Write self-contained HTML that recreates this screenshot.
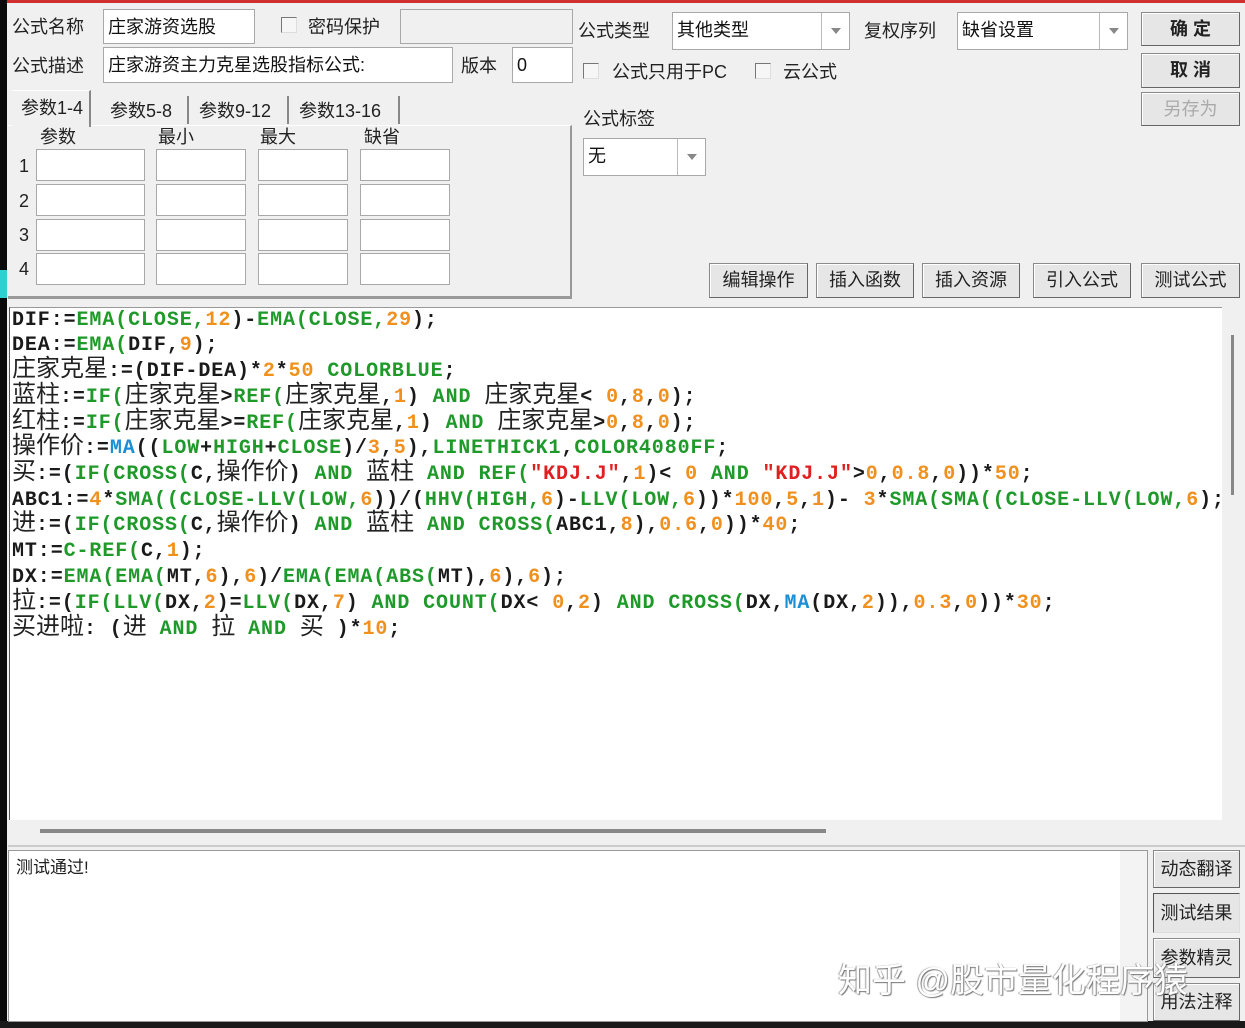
<!DOCTYPE html>
<html><head><meta charset="utf-8"><style>
*{margin:0;padding:0;box-sizing:border-box}
body{width:1245px;height:1028px;background:#f0f0f0;position:relative;overflow:hidden;font-family:"Liberation Sans","Noto Sans CJK SC",sans-serif;font-size:17px;color:#111}
.a{position:absolute}
.lbl{position:absolute;font-size:18px;color:#222;line-height:20px;white-space:nowrap}
.in{position:absolute;background:#fff;border:1px solid #a8a8a8;font-size:18px;line-height:20px;padding:7px 4px;white-space:nowrap;overflow:hidden;color:#111}
.cb{position:absolute;width:16px;height:16px;border:1px solid #777;border-right-color:#ddd;border-bottom-color:#ddd;background:#f6f6f6}
.btn{position:absolute;background:#e6e6e6;border:1px solid #8a8a8a;border-right-color:#666;border-bottom-color:#666;box-shadow:inset 1px 1px 0 #fff;font-size:18px;color:#222;text-align:center;white-space:nowrap}
.sel{position:absolute;background:#fff;border:1px solid #a8a8a8;font-size:18px;padding:7px 4px;line-height:20px}
.sel .ar{position:absolute;right:0;top:0;bottom:0;width:28px;border-left:1px solid #bbb}
.sel .ar:after{content:"";position:absolute;left:9px;top:15px;border:5px solid transparent;border-top:6px solid #888}
.code{position:absolute;left:9px;top:307px;width:1213px;height:513px;background:#fff;border-left:1px solid #555;border-top:1px solid #999;overflow:hidden}
.ln{position:absolute;left:2px;white-space:pre;font-family:"Liberation Mono","Noto Sans CJK SC",monospace;font-weight:bold;font-size:20px;letter-spacing:0.9px;color:#1a1a1a;height:26px;line-height:26px}
.c{font-family:"Noto Sans CJK SC",sans-serif;font-weight:normal;font-size:24px;letter-spacing:0;color:#222;line-height:0}
.g{color:#1f9a2a}.o{color:#f0901e}.b{color:#1b8fd6}.r{color:#e02020}
</style></head><body>
<div class="a" style="left:0;top:0;width:1245px;height:3px;background:#d03030"></div>
<div class="a" style="left:0;top:0;width:7px;height:1028px;background:#0a0a0a"></div>
<div class="a" style="left:0;top:270px;width:7px;height:28px;background:#30d0d0"></div>
<div class="a" style="left:0;top:1021px;width:1245px;height:7px;background:#1a1a1a"></div>

<div class="lbl" style="left:12px;top:17px">公式名称</div>
<div class="in" style="left:103px;top:9px;width:152px;height:35px">庄家游资选股</div>
<div class="cb" style="left:281px;top:17px"></div>
<div class="lbl" style="left:308px;top:17px">密码保护</div>
<div class="in" style="left:400px;top:9px;width:173px;height:35px;background:#f0f0f0"></div>
<div class="lbl" style="left:12px;top:56px">公式描述</div>
<div class="in" style="left:103px;top:47px;width:350px;height:36px">庄家游资主力克星选股指标公式:</div>
<div class="lbl" style="left:461px;top:56px">版本</div>
<div class="in" style="left:512px;top:47px;width:61px;height:36px">0</div>

<div class="a" style="left:8px;top:125px;width:564px;height:174px;border-right:2px solid #999;border-bottom:3px solid #999;border-top:1px solid #fff"></div>
<div class="a" style="left:12px;top:90px;width:79px;height:37px;background:#f0f0f0;border-top:1px solid #fff;border-right:2px solid #888"></div>
<div class="lbl" style="left:21px;top:98px">参数1-4</div>
<div class="lbl" style="left:110px;top:101px">参数5-8</div>
<div class="a" style="left:187px;top:96px;width:2px;height:28px;background:#888"></div>
<div class="lbl" style="left:199px;top:101px">参数9-12</div>
<div class="a" style="left:287px;top:96px;width:2px;height:28px;background:#888"></div>
<div class="lbl" style="left:299px;top:101px">参数13-16</div>
<div class="a" style="left:398px;top:96px;width:2px;height:28px;background:#888"></div>

<div class="lbl" style="left:40px;top:127px">参数</div>
<div class="lbl" style="left:158px;top:127px">最小</div>
<div class="lbl" style="left:260px;top:127px">最大</div>
<div class="lbl" style="left:364px;top:127px">缺省</div>
<div class="lbl" style="left:19px;top:156px">1</div>
<div class="lbl" style="left:19px;top:191px">2</div>
<div class="lbl" style="left:19px;top:225px">3</div>
<div class="lbl" style="left:19px;top:259px">4</div>
<div class="in" style="left:36px;top:149px;width:109px;height:32px"></div><div class="in" style="left:156px;top:149px;width:90px;height:32px"></div><div class="in" style="left:258px;top:149px;width:90px;height:32px"></div><div class="in" style="left:360px;top:149px;width:90px;height:32px"></div>
<div class="in" style="left:36px;top:184px;width:109px;height:32px"></div><div class="in" style="left:156px;top:184px;width:90px;height:32px"></div><div class="in" style="left:258px;top:184px;width:90px;height:32px"></div><div class="in" style="left:360px;top:184px;width:90px;height:32px"></div>
<div class="in" style="left:36px;top:219px;width:109px;height:32px"></div><div class="in" style="left:156px;top:219px;width:90px;height:32px"></div><div class="in" style="left:258px;top:219px;width:90px;height:32px"></div><div class="in" style="left:360px;top:219px;width:90px;height:32px"></div>
<div class="in" style="left:36px;top:253px;width:109px;height:32px"></div><div class="in" style="left:156px;top:253px;width:90px;height:32px"></div><div class="in" style="left:258px;top:253px;width:90px;height:32px"></div><div class="in" style="left:360px;top:253px;width:90px;height:32px"></div>

<div class="lbl" style="left:578px;top:21px">公式类型</div>
<div class="sel" style="left:672px;top:12px;width:178px;height:38px">其他类型<div class="ar"></div></div>
<div class="lbl" style="left:864px;top:21px">复权序列</div>
<div class="sel" style="left:957px;top:12px;width:171px;height:38px">缺省设置<div class="ar"></div></div>
<div class="btn" style="left:1141px;top:12px;width:99px;height:34px;line-height:32px;font-weight:bold">确&nbsp;定</div>
<div class="btn" style="left:1141px;top:53px;width:99px;height:35px;line-height:33px;font-weight:bold">取&nbsp;消</div>
<div class="btn" style="left:1141px;top:92px;width:99px;height:34px;line-height:32px;color:#aaa">另存为</div>
<div class="cb" style="left:583px;top:63px"></div>
<div class="lbl" style="left:612px;top:62px">公式只用于PC</div>
<div class="cb" style="left:755px;top:63px"></div>
<div class="lbl" style="left:783px;top:62px">云公式</div>
<div class="lbl" style="left:583px;top:109px">公式标签</div>
<div class="sel" style="left:583px;top:138px;width:123px;height:38px">无<div class="ar"></div></div>
<div class="btn" style="left:709px;top:263px;width:99px;height:35px;line-height:33px">编辑操作</div>
<div class="btn" style="left:816px;top:263px;width:98px;height:35px;line-height:33px">插入函数</div>
<div class="btn" style="left:922px;top:263px;width:98px;height:35px;line-height:33px">插入资源</div>
<div class="btn" style="left:1033px;top:263px;width:98px;height:35px;line-height:33px">引入公式</div>
<div class="btn" style="left:1141px;top:263px;width:99px;height:35px;line-height:33px">测试公式</div>

<div class="code">
<div class="ln" style="top:0px">DIF:=<span class="g">EMA(CLOSE,</span><span class="o">12</span>)-<span class="g">EMA(CLOSE,</span><span class="o">29</span>);</div>
<div class="ln" style="top:25px">DEA:=<span class="g">EMA(</span>DIF,<span class="o">9</span>);</div>
<div class="ln" style="top:51px"><span class="c">庄家克星</span>:=(DIF-DEA)*<span class="o">2</span>*<span class="o">50</span> <span class="g">COLORBLUE</span>;</div>
<div class="ln" style="top:77px"><span class="c">蓝柱</span>:=<span class="g">IF(</span><span class="c">庄家克星</span>&gt;<span class="g">REF(</span><span class="c">庄家克星</span>,<span class="o">1</span>) <span class="g">AND</span> <span class="c">庄家克星</span>&lt; <span class="o">0</span>,<span class="o">8</span>,<span class="o">0</span>);</div>
<div class="ln" style="top:103px"><span class="c">红柱</span>:=<span class="g">IF(</span><span class="c">庄家克星</span>&gt;=<span class="g">REF(</span><span class="c">庄家克星</span>,<span class="o">1</span>) <span class="g">AND</span> <span class="c">庄家克星</span>&gt;<span class="o">0</span>,<span class="o">8</span>,<span class="o">0</span>);</div>
<div class="ln" style="top:128px"><span class="c">操作价</span>:=<span class="b">MA</span>((<span class="g">LOW</span>+<span class="g">HIGH</span>+<span class="g">CLOSE</span>)/<span class="o">3</span>,<span class="o">5</span>),<span class="g">LINETHICK1</span>,<span class="g">COLOR4080FF</span>;</div>
<div class="ln" style="top:154px"><span class="c">买</span>:=(<span class="g">IF(CROSS(</span>C,<span class="c">操作价</span>) <span class="g">AND</span> <span class="c">蓝柱</span> <span class="g">AND</span> <span class="g">REF(</span><span class="r">"KDJ.J"</span>,<span class="o">1</span>)&lt; <span class="o">0</span> <span class="g">AND</span> <span class="r">"KDJ.J"</span>&gt;<span class="o">0</span>,<span class="o">0.8</span>,<span class="o">0</span>))*<span class="o">50</span>;</div>
<div class="ln" style="top:180px">ABC1:=<span class="o">4</span>*<span class="g">SMA((CLOSE-LLV(LOW,</span><span class="o">6</span>))/(<span class="g">HHV(HIGH,</span><span class="o">6</span>)-<span class="g">LLV(LOW,</span><span class="o">6</span>))*<span class="o">100</span>,<span class="o">5</span>,<span class="o">1</span>)- <span class="o">3</span>*<span class="g">SMA(SMA((CLOSE-LLV(LOW,</span><span class="o">6</span>);</div>
<div class="ln" style="top:205px"><span class="c">进</span>:=(<span class="g">IF(CROSS(</span>C,<span class="c">操作价</span>) <span class="g">AND</span> <span class="c">蓝柱</span> <span class="g">AND</span> <span class="g">CROSS(</span>ABC1,<span class="o">8</span>),<span class="o">0.6</span>,<span class="o">0</span>))*<span class="o">40</span>;</div>
<div class="ln" style="top:231px">MT:=<span class="g">C-REF(</span>C,<span class="o">1</span>);</div>
<div class="ln" style="top:257px">DX:=<span class="g">EMA(EMA(</span>MT,<span class="o">6</span>),<span class="o">6</span>)/<span class="g">EMA(EMA(ABS(</span>MT),<span class="o">6</span>),<span class="o">6</span>);</div>
<div class="ln" style="top:283px"><span class="c">拉</span>:=(<span class="g">IF(LLV(</span>DX,<span class="o">2</span>)=<span class="g">LLV(</span>DX,<span class="o">7</span>) <span class="g">AND</span> <span class="g">COUNT(</span>DX&lt; <span class="o">0</span>,<span class="o">2</span>) <span class="g">AND</span> <span class="g">CROSS(</span>DX,<span class="b">MA</span>(DX,<span class="o">2</span>)),<span class="o">0.3</span>,<span class="o">0</span>))*<span class="o">30</span>;</div>
<div class="ln" style="top:309px"><span class="c">买进啦</span>: (<span class="c">进</span> <span class="g">AND</span> <span class="c">拉</span> <span class="g">AND</span> <span class="c">买</span> )*<span class="o">10</span>;</div>
</div>
<div class="a" style="left:1222px;top:307px;width:23px;height:513px;background:#f0f0f0"></div>
<div class="a" style="left:1231px;top:335px;width:3px;height:160px;background:#888"></div>
<div class="a" style="left:40px;top:829px;width:786px;height:4px;background:#888"></div>
<div class="a" style="left:8px;top:845px;width:1237px;height:2px;background:#ccc"></div>

<div class="a" style="left:8px;top:850px;width:1140px;height:172px;background:#fff;border:1px solid #999"></div>
<div class="a" style="left:1120px;top:851px;width:27px;height:170px;background:#f3f3f3"></div>
<div class="lbl" style="left:16px;top:858px;font-size:17px">测试通过!</div>
<div class="btn" style="left:1153px;top:850px;width:87px;height:38px;line-height:36px">动态翻译</div>
<div class="btn" style="left:1153px;top:893px;width:87px;height:40px;line-height:38px;border-color:#555 #ddd #ddd #555;box-shadow:none">测试结果</div>
<div class="btn" style="left:1153px;top:938px;width:87px;height:40px;line-height:38px">参数精灵</div>
<div class="btn" style="left:1153px;top:983px;width:87px;height:38px;line-height:36px">用法注释</div>
<div class="a" style="left:838px;top:953px;font-size:34px;color:#fff;text-shadow:1px 1px 1px #777,-1px 0 1px #999;white-space:nowrap">知乎 @股市量化程序猿</div>
</body></html>
